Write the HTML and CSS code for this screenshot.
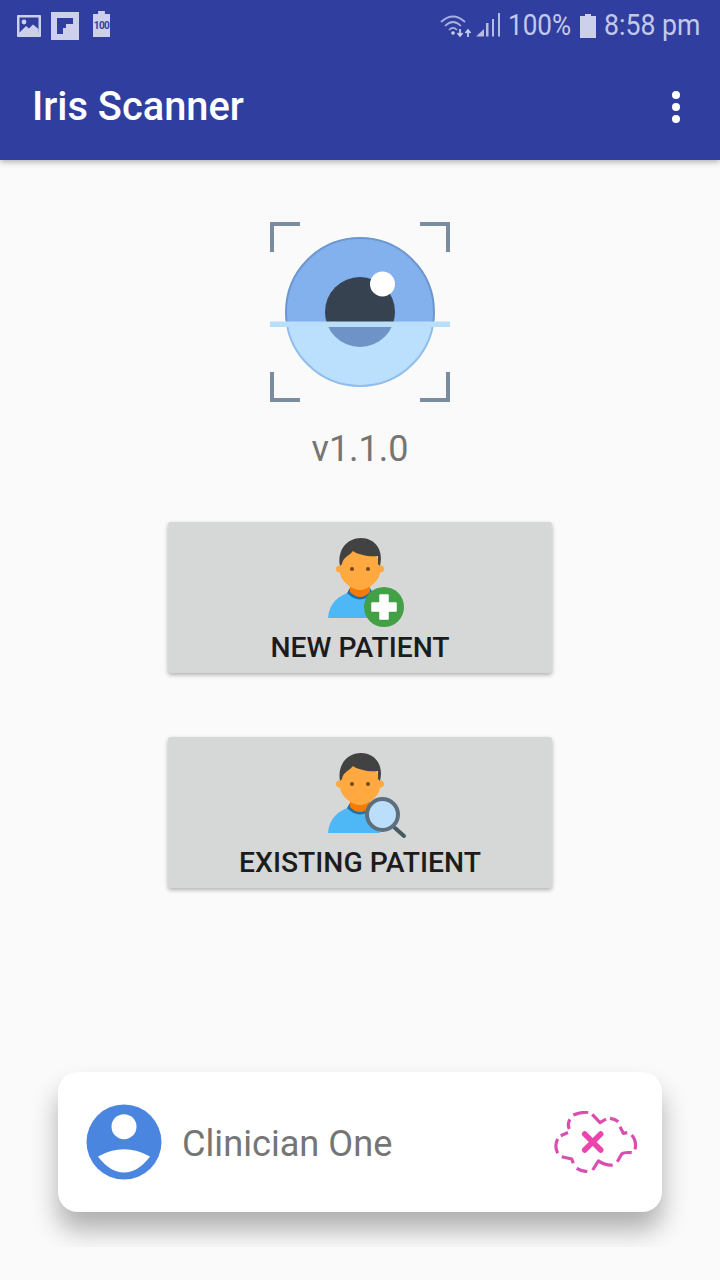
FILE: index.html
```html
<!DOCTYPE html>
<html lang="en">
<head>
    <meta charset="UTF-8">
    <meta name="viewport" content="width=device-width, initial-scale=1.0">
    <title>Iris Scanner</title>
    <link rel="stylesheet" href="styles.css">
</head>
<body>
    <header class="top">
        <div class="status-bar">
            <svg class="st-image" viewBox="0 0 24 22">
                <rect width="24" height="22" rx="1" fill="#cdd0ea"/>
                <rect x="2.5" y="2.5" width="19" height="15" fill="#303f9f"/>
                <circle cx="7" cy="7" r="2.4" fill="#cdd0ea"/>
                <path d="M2.5 17.5 L9 11 L12 13.5 L16 9.5 L21.5 14 V19 H2.5 Z" fill="#cdd0ea"/>
            </svg>
            <svg class="st-flip" viewBox="0 0 28 28">
                <rect width="28" height="28" fill="#cdd0ea"/>
                <path d="M6 6 H22 V12 H15 V16 H12 V22 H6 Z" fill="#303f9f"/>
            </svg>
            <div class="st-batt">100</div>
            <div class="status-right">
                <svg class="st-net" viewBox="0 0 62 26">
                    <g fill="none" stroke="#a9b1de" stroke-width="1.7">
                        <path d="M1 9 Q13 -2 25 9"/>
                        <path d="M5 13 Q13 5 21 13"/>
                        <path d="M9 17 Q13 13 17 17"/>
                    </g>
                    <circle cx="13" cy="20" r="1.8" fill="#cdd0ea"/>
                    <path d="M20 16 V22 M17.5 20 L20 23 L22.5 20" fill="none" stroke="#cdd0ea" stroke-width="1.7"/>
                    <path d="M28 24 V18 M25.5 20 L28 17 L30.5 20" fill="none" stroke="#cdd0ea" stroke-width="1.7"/>
                    <path d="M36 23.5 L44 16 V23.5 Z" fill="#b5bbe2"/>
                    <rect x="46" y="10" width="2.500" height="13.500" fill="#b5bbe2"/>
                    <rect x="52" y="6" width="2" height="17.500" fill="#b5bbe2"/>
                    <rect x="58" y="0" width="2" height="23.500" fill="#b5bbe2"/>
                </svg>
                <span class="st-text st-pct">100%</span>
                <svg class="st-cell" viewBox="0 0 16 24">
                    <path d="M5 0 H11 V2 H16 V24 H0 V2 H5 Z" fill="#cdd0ea"/>
                </svg>
                <span class="st-text st-time">8:58 pm</span>
            </div>
        </div>
        <div class="app-bar">
            <h1>Iris Scanner</h1>
            <div class="menu-dots"><i></i><i></i><i></i></div>
        </div>
    </header>

    <main class="content">
        <svg class="logo" viewBox="0 0 180 180">
            <defs>
                <clipPath id="upper"><rect width="180" height="102"/></clipPath>
                <clipPath id="lower"><rect y="102" width="180" height="78"/></clipPath>
            </defs>
            <g fill="none" stroke="#7b8c9e" stroke-width="4">
                <path d="M30 2 H2 V30"/>
                <path d="M150 2 H178 V30"/>
                <path d="M2 150 V178 H30"/>
                <path d="M178 150 V178 H150"/>
            </g>
            <g clip-path="url(#upper)">
                <circle cx="90" cy="90" r="74" fill="#82b1ee" stroke="#6c97cf" stroke-width="2"/>
                <circle cx="90" cy="90" r="35" fill="#36424f"/>
            </g>
            <g clip-path="url(#lower)">
                <circle cx="90" cy="90" r="74" fill="#bbe0fd" stroke="#8fbeec" stroke-width="2"/>
                <circle cx="90" cy="90" r="35" fill="#6f93c6"/>
            </g>
            <circle cx="112.500" cy="62" r="12.500" fill="#fff"/>
            <rect y="99.500" width="180" height="5.500" fill="#b9defa"/>
        </svg>
        <p class="version">v1.1.0</p>

        <button class="action" type="button">
            <svg class="person" viewBox="-10 8 100 92">
                <g id="person">
                    <path d="M8 88 C9 73 19 65 31 62 H50 L60 88 Z" fill="#4db8f5"/>
                    <path d="M27 63 Q40 76 53 63 L50 58 H30 Z" fill="#1f6fa8"/>
                    <path d="M30 52 H50 V62 Q40 72 30 62 Z" fill="#f57c00"/>
                    <circle cx="19.500" cy="39" r="3.500" fill="#ffa940"/>
                    <circle cx="60.500" cy="39" r="3.500" fill="#ffa940"/>
                    <path d="M21 34 Q24 16 40 16 Q56 16 59 34 L60 42 C60 50 49 60 40 60 C31 60 20 50 20 42 Z" fill="#ffa940"/>
                    <path d="M20 36 C17 20 27 8 41 8 C55 8 64 20 60 36 L58 34 V26 C50 27 38 25 33 21 C29 26 23 27 22 34 Z" fill="#424242"/>
                    <circle cx="32" cy="39" r="2" fill="#784719"/>
                    <circle cx="48" cy="39" r="2" fill="#784719"/>
                </g>
                <circle cx="64" cy="77" r="20" fill="#43a047"/>
                <path d="M60 65 H68 V73 H76 V81 H68 V89 H60 V81 H52 V73 H60 Z" fill="#fff" stroke="#fff" stroke-width="1.500" stroke-linejoin="round"/>
            </svg>
            <span class="action-label">NEW PATIENT</span>
        </button>

        <button class="action" type="button">
            <svg class="person" viewBox="-10 8 100 92">
                <use href="#person"/>
                <path d="M75 83 L84 91" stroke="#455a64" stroke-width="4" stroke-linecap="round"/>
                <circle cx="62.500" cy="69.500" r="15.500" fill="#bbdefb" stroke="#5c6f7c" stroke-width="4"/>
            </svg>
            <span class="action-label">EXISTING PATIENT</span>
        </button>
    </main>

    <div class="clinician-wrap">
        <div class="clinician-card">
            <svg class="avatar" viewBox="0 0 76 76">
                <circle cx="38" cy="38" r="37.500" fill="#4a86e0"/>
                <circle cx="38" cy="22.700" r="12.500" fill="#fff"/>
                <path d="M12 52.500 Q38 38 64 52.500 Q52 68.500 38 68.500 Q24 68.500 12 52.500 Z" fill="#fff"/>
            </svg>
            <span class="clinician-name">Clinician One</span>
            <svg class="cloud" viewBox="0 0 84 62">
                <g fill="none" stroke="#d94fb0" stroke-width="3.200" stroke-linejoin="round">
                    <path d="M19.300 4 Q26 1 34.300 1.300"/>
                    <path d="M38.300 3.300 L46 11.700 L52 8"/>
                    <path d="M56 7.300 Q61 8 64.300 10.700"/>
                    <path d="M66 15.700 L69.300 22.300 L73.300 21.700"/>
                    <path d="M77.700 24 Q83 30 81 38.300"/>
                    <path d="M77.700 41.700 Q70 41 67.700 43 L63.300 50.700"/>
                    <path d="M58.700 54 Q53 55 44.300 50 L38.700 59"/>
                    <path d="M33.300 60.700 Q27 60 22.700 57.300"/>
                    <path d="M19.300 52.300 L17.700 48 L7.700 45.700"/>
                    <path d="M3.700 42.300 Q0 35 3.700 28"/>
                    <path d="M6.700 24.700 L14 21.500"/>
                    <path d="M15.300 18 Q13 13 16 8.300"/>
                </g>
                <path d="M30.700 23 L46.700 39 M46.700 23 L30.700 39" stroke="#e945ac" stroke-width="5.500" stroke-linecap="round"/>
            </svg>
        </div>
    </div>
</body>
</html>
```

FILE: styles.css
```css
html, body {
    margin: 0;
    height: 1280px;
    overflow: hidden;
}
body {
    display: flex;
    flex-direction: column;
    font-family: Roboto, sans-serif;
    background: #fafafa;
}
.top {
    position: relative;
    background: #303f9f;
    box-shadow: 0 2px 6px rgba(0,0,0,0.3);
}
.status-bar {
    display: flex;
    align-items: center;
    height: 52px;
    padding: 0 20px 0 17px;
    box-sizing: border-box;
}
.st-image {
    width: 24px;
    height: 22px;
    margin-right: 10px;
}
.st-flip {
    width: 28px;
    height: 28px;
    margin-right: 14px;
}
.st-batt {
    width: 17px;
    height: 26px;
    margin-bottom: 4px;
    background: #cdd0ea;
    color: #303f9f;
    font-size: 10px;
    font-weight: 700;
    line-height: 29px;
    text-align: center;
    letter-spacing: -0.6px;
    clip-path: polygon(0 3px, 30% 3px, 30% 0, 70% 0, 70% 3px, 100% 3px, 100% 100%, 0 100%);
}
.status-right {
    display: flex;
    align-items: center;
    margin-left: auto;
}
.st-net {
    width: 62px;
    height: 26px;
    margin-right: 8px;
}
.st-text {
    display: inline-block;
    color: #c3c9ea;
    font-size: 30px;
    line-height: 34px;
    margin-bottom: 3px;
    transform-origin: left center;
}
.st-pct {
    width: 62px;
    transform: scaleX(0.87);
    margin-right: 10px;
    margin-left: -2px;
}
.st-cell {
    width: 16px;
    height: 24px;
    margin-right: 8px;
}
.st-time {
    width: 96px;
    white-space: nowrap;
    transform: scaleX(0.89);
}
.app-bar {
    display: flex;
    align-items: center;
    justify-content: space-between;
    height: 108px;
    padding: 1px 33px 0 32px;
    box-sizing: border-box;
}
.app-bar h1 {
    margin: 0;
    color: #fff;
    font-size: 39.8px;
    font-weight: 500;
    line-height: 106px;
}
.menu-dots {
    display: flex;
    flex-direction: column;
    gap: 4px;
    margin-right: 7px;
}
.menu-dots i {
    display: block;
    width: 8px;
    height: 8px;
    border-radius: 50%;
    background: #fff;
}
.content {
    flex: 1;
    display: flex;
    flex-direction: column;
    align-items: center;
    padding-top: 62px;
}
.logo {
    width: 180px;
    height: 180px;
}
.version {
    margin: 26px 0 52px;
    color: #757575;
    font-size: 36px;
    line-height: 42px;
}
.action {
    display: flex;
    flex-direction: column;
    align-items: center;
    width: 384px;
    height: 151px;
    margin-bottom: 64px;
    padding: 16px 0 0;
    border: none;
    border-radius: 3px;
    background: #d6d7d7;
    box-shadow: 0 2px 4px rgba(0,0,0,0.3);
    font-family: Roboto, sans-serif;
}
.person {
    width: 100px;
    height: 92px;
    flex-shrink: 0;
}
.action-label {
    margin-top: 1px;
    color: #1c1c1c;
    font-size: 28.3px;
    font-weight: 500;
    line-height: 34px;
}
.clinician-wrap {
    height: 205px;
    margin-bottom: 33px;
    padding: 30px 58px 0;
    box-sizing: border-box;
    overflow: hidden;
}
.clinician-card {
    display: flex;
    align-items: center;
    height: 140px;
    padding: 0 24px 0 28px;
    border-radius: 20px;
    background: #fff;
    box-shadow: 0 18px 26px rgba(0,0,0,0.3);
}
.avatar {
    width: 76px;
    height: 76px;
    margin-right: 20px;
}
.clinician-name {
    padding-top: 3px;
    color: #757575;
    font-size: 36.2px;
}
.cloud {
    width: 84px;
    height: 62px;
    margin-left: auto;
}
```
